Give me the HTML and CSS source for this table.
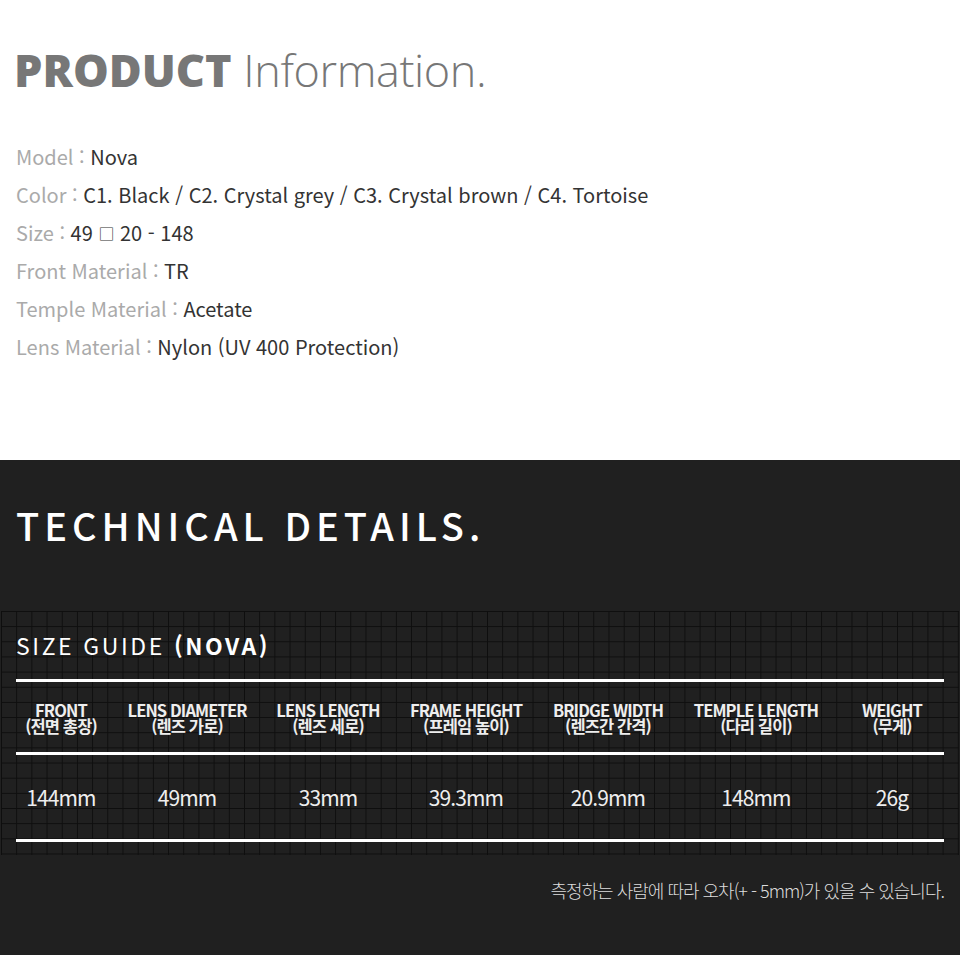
FILE: index.html
```html
<!DOCTYPE html>
<html lang="ko">
<head>
<meta charset="utf-8">
<title>Product Information</title>
<link rel="stylesheet" href="styles.css">
</head>
<body>
<section class="product">
  <h1 class="product-title"><b>PRODUCT</b> <span>Information.</span></h1>
  <ul class="info">
    <li><span class="label">Model : </span><span class="value">Nova</span></li>
    <li><span class="label">Color : </span><span class="value">C1. Black / C2. Crystal grey / C3. Crystal brown / C4. Tortoise</span></li>
    <li><span class="label">Size : </span><span class="value">49 <span class="sq">□</span> 20 - 148</span></li>
    <li><span class="label">Front Material : </span><span class="value">TR</span></li>
    <li><span class="label">Temple Material : </span><span class="value">Acetate</span></li>
    <li><span class="label">Lens Material : </span><span class="value">Nylon (UV 400 Protection)</span></li>
  </ul>
</section>
<section class="tech">
  <h2 class="tech-title">TECHNICAL DETAILS.</h2>
  <div class="grid-board">
    <h3 class="guide-title">SIZE GUIDE <b>(NOVA)</b></h3>
    <div class="size-table">
      <div class="row head">
        <div class="cell">FRONT<br>(전면 총장)</div>
        <div class="cell">LENS DIAMETER<br>(렌즈 가로)</div>
        <div class="cell">LENS LENGTH<br>(렌즈 세로)</div>
        <div class="cell">FRAME HEIGHT<br>(프레임 높이)</div>
        <div class="cell">BRIDGE WIDTH<br>(렌즈간 간격)</div>
        <div class="cell">TEMPLE LENGTH<br>(다리 길이)</div>
        <div class="cell">WEIGHT<br>(무게)</div>
      </div>
      <div class="row vals">
        <div class="cell">144mm</div>
        <div class="cell">49mm</div>
        <div class="cell">33mm</div>
        <div class="cell">39.3mm</div>
        <div class="cell">20.9mm</div>
        <div class="cell">148mm</div>
        <div class="cell">26g</div>
      </div>
    </div>
  </div>
  <p class="note">측정하는 사람에 따라 오차(+ - 5mm)가 있을 수 있습니다.</p>
</section>
</body>
</html>
```
FILE: styles.css
```css
* { box-sizing: border-box; }
html, body { margin: 0; padding: 0; }
body {
  width: 960px;
  height: 955px;
  overflow: hidden;
  background: #202020;
  font-family: "Noto Sans CJK KR", "Noto Sans", sans-serif;
}
.product {
  background: #ffffff;
  height: 460px;
  padding: 41px 0 0 14px;
}
.product-title {
  margin: 0;
  font-family: "Open Sans", sans-serif;
  font-size: 45px;
  line-height: 58px;
  color: #777777;
  font-weight: 300;
  letter-spacing: 0;
}
.product-title b {
  font-weight: 800;
}
.product-title span {
  font-weight: 300;
  letter-spacing: -0.4px;
}
.info {
  list-style: none;
  margin: 39px 0 0 2px;
  padding: 0;
  font-size: 20px;
  line-height: 38px;
}
.info .label { color: #aaaaaa; }
.info .value { color: #333333; }
.info .sq { font-size: 16px; vertical-align: 1px; }

.tech {
  height: 495px;
  padding-top: 37px;
}
.tech-title {
  margin: 0 0 0 16px;
  font-size: 38px;
  font-weight: 500;
  line-height: 56px;
  letter-spacing: 5px;
  color: #ffffff;
}
.grid-board {
  margin: 58px 0 0 1px;
  width: 958px;
  height: 244px;
  background-color: #202020;
  background-image:
    linear-gradient(to right, #0e0e0e 1px, transparent 1px),
    linear-gradient(to bottom, #0e0e0e 1px, transparent 1px);
  background-size: 15.19px 15.17px;
  padding: 18px 0 0 15px;
}
.guide-title {
  margin: 0;
  font-size: 23px;
  line-height: 32px;
  font-weight: 400;
  letter-spacing: 2.6px;
  color: #ffffff;
}
.guide-title b { font-weight: 700; }
.size-table {
  margin-top: 18px;
  width: 928px;
  border-top: 3px solid #ffffff;
  border-bottom: 3px solid #ffffff;
}
.row {
  display: grid;
  grid-template-columns: 90px 162px 120px 156px 128px 168px 104px;
  text-align: center;
  color: #eeeeee;
}
.head {
  height: 73px;
  border-bottom: 3px solid #ffffff;
  align-items: center;
  font-weight: 700;
  font-size: 16.5px;
  line-height: 16.5px;
  letter-spacing: -0.9px;
  padding-top: 2px;
}
.vals {
  height: 84px;
  align-items: center;
  font-size: 21px;
  letter-spacing: -0.9px;
  font-weight: 400;
}
.note {
  margin: 22px 16px 0 0;
  text-align: right;
  color: #dddddd;
  font-size: 18px;
  font-weight: 300;
  letter-spacing: -1px;
  line-height: 26px;
}
```
